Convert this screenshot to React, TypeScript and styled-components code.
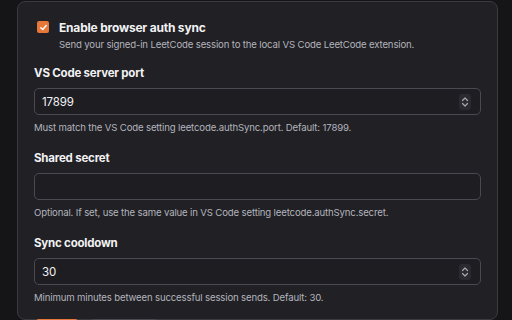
import React from "react";
import styled, { createGlobalStyle } from "styled-components";

const Global = createGlobalStyle`
  html, body { margin: 0; padding: 0; background: #151518; }
  body { font-family: Inter, "Liberation Sans", sans-serif; -webkit-font-smoothing: antialiased; }
  * { box-sizing: border-box; }
`;

const Page = styled.div`
  width: 512px;
  height: 320px;
  overflow: hidden;
  background: #151518;
  display: flex;
  padding: 1px 14px 0 17px;
`;

const Card = styled.div`
  flex: 1;
  background: #202025;
  border: 1px solid #3a3a41;
  border-radius: 8px;
  padding: 18px 16px 0 16px;
  display: flex;
  flex-direction: column;
`;

const ToggleRow = styled.div`
  display: flex;
  gap: 10px;
  padding-left: 3px;
  margin-bottom: 13px;
`;

const Check = styled.div`
  width: 12px;
  height: 12px;
  margin-top: 1px;
  border-radius: 2px;
  background: #e8783a;
  display: flex;
  align-items: center;
  justify-content: center;
  flex: none;
`;

const ToggleText = styled.div`
  display: flex;
  flex-direction: column;
  gap: 2px;
`;

const Title = styled.div`
  font-size: 12px;
  font-weight: 700;
  letter-spacing: -0.2px;
  line-height: 16px;
  color: #f2f2f4;
`;

const Help = styled.div`
  font-size: 9.6px;
  letter-spacing: -0.15px;
  line-height: 14px;
  color: #b4b4bc;
`;

const Field = styled.div`
  display: flex;
  flex-direction: column;
  margin-bottom: 15px;
`;

const Label = styled.div`
  font-size: 11.5px;
  font-weight: 700;
  letter-spacing: -0.2px;
  line-height: 16px;
  color: #f2f2f4;
  margin-bottom: 7px;
`;

const InputBox = styled.div`
  height: 27px;
  border: 1px solid #4a4a52;
  border-radius: 5px;
  background: #1d1d22;
  display: flex;
  align-items: center;
  padding: 0 7px;
  margin-bottom: 6px;
`;

const Value = styled.span`
  flex: 1;
  font-size: 11.5px;
  letter-spacing: -0.1px;
  color: #f2f2f4;
`;

const Spinner = styled.div`
  width: 12px;
  height: 16px;
  border-radius: 3px;
  background: #2a2a30;
  display: flex;
  align-items: center;
  justify-content: center;
  margin-right: 2px;
`;

const Buttons = styled.div`
  display: flex;
  gap: 9px;
  margin-top: -1px;
`;

const Button = styled.div<{ $primary?: boolean; $w: number }>`
  width: ${(p) => p.$w}px;
  height: 26px;
  border-radius: 5px;
  font-size: 11px;
  font-weight: 600;
  display: flex;
  align-items: center;
  justify-content: center;
  color: ${(p) => (p.$primary ? "#1a1a1a" : "#e8e8ec")};
  background: ${(p) => (p.$primary ? "#e8783a" : "#26262b")};
  border: 1px solid ${(p) => (p.$primary ? "#e8783a" : "#4a4a52")};
`;

const SpinIcon = () => (
  <svg width="8" height="12" viewBox="0 0 8 12" fill="none" stroke="#a8a8b2" strokeWidth="1.2" strokeLinecap="round" strokeLinejoin="round">
    <path d="M1.5 4.5 L4 2 L6.5 4.5" />
    <path d="M1.5 7.5 L4 10 L6.5 7.5" />
  </svg>
);

const NumberInput = ({ value }: { value: string }) => (
  <InputBox>
    <Value>{value}</Value>
    <Spinner>
      <SpinIcon />
    </Spinner>
  </InputBox>
);

export default function App() {
  return (
    <>
      <Global />
      <Page>
        <Card>
          <ToggleRow>
            <Check>
              <svg width="9" height="9" viewBox="0 0 10 10" fill="none" stroke="#fff" strokeWidth="1.6" strokeLinecap="round" strokeLinejoin="round">
                <path d="M2 5.2 L4.2 7.3 L8 2.8" />
              </svg>
            </Check>
            <ToggleText>
              <Title>Enable browser auth sync</Title>
              <Help>Send your signed-in LeetCode session to the local VS Code LeetCode extension.</Help>
            </ToggleText>
          </ToggleRow>
          <Field>
            <Label>VS Code server port</Label>
            <NumberInput value="17899" />
            <Help>Must match the VS Code setting leetcode.authSync.port. Default: 17899.</Help>
          </Field>
          <Field>
            <Label>Shared secret</Label>
            <InputBox>
              <Value></Value>
            </InputBox>
            <Help>Optional. If set, use the same value in VS Code setting leetcode.authSync.secret.</Help>
          </Field>
          <Field>
            <Label>Sync cooldown</Label>
            <NumberInput value="30" />
            <Help>Minimum minutes between successful session sends. Default: 30.</Help>
          </Field>
          <Buttons>
            <Button $primary $w={46}>Save</Button>
            <Button $w={71}>Test sync</Button>
          </Buttons>
        </Card>
      </Page>
    </>
  );
}
